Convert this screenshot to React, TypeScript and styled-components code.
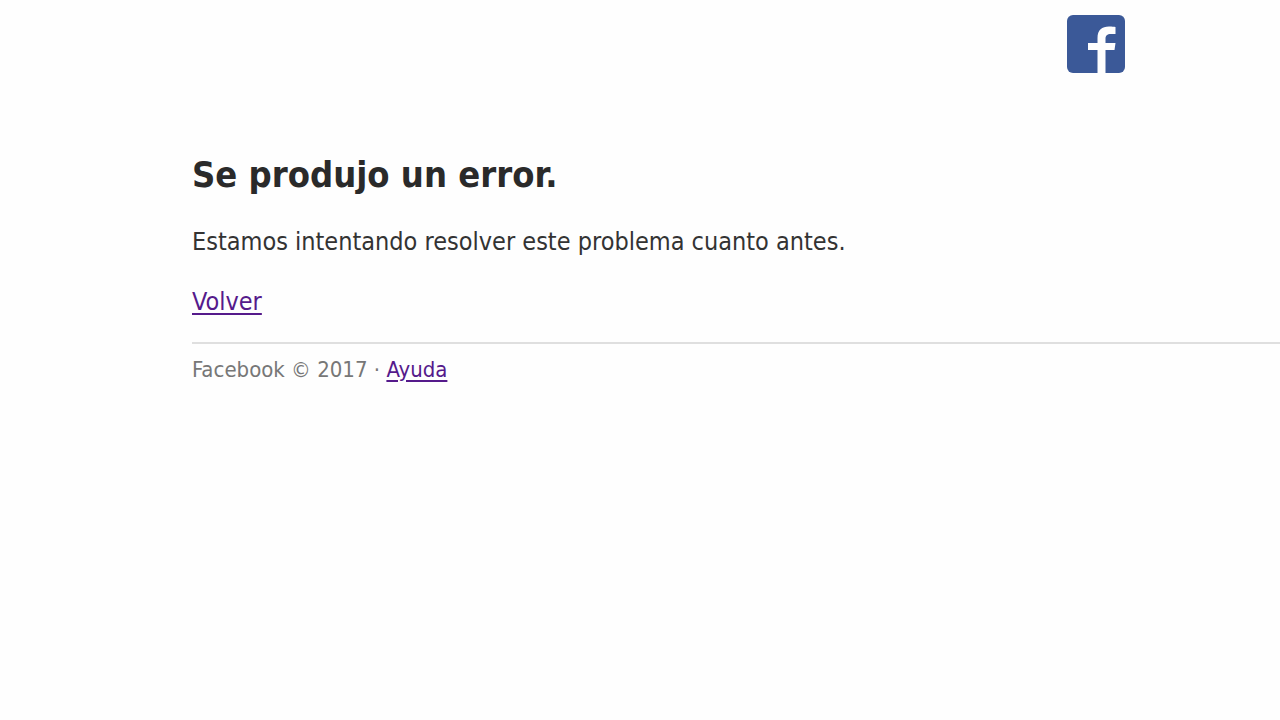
import React from "react";
import styled, { createGlobalStyle } from "styled-components";

const GlobalStyle = createGlobalStyle`
  body {
    margin: 0;
    background: #fefefe;
    color: #333;
    font-family: "DejaVu Sans Condensed", "DejaVu Sans", Tahoma, sans-serif;
    font-size: 25px;
    line-height: 30px;
  }
`;

const Page = styled.div`
  padding-left: 15%;
`;

const Header = styled.header`
  display: flex;
  justify-content: flex-end;
  padding: 14px 154px 0 0;
`;

const Logo = styled.svg`
  display: block;
  width: 60px;
  height: 60px;
`;

const Title = styled.h1`
  margin: 79px 0 0;
  color: #2a2a2a;
  font-size: 36px;
  line-height: 44px;
`;

const Text = styled.p`
  margin: 30px 0 0;
`;

const Link = styled.a`
  color: #551a8b;
  text-decoration: underline;
  text-decoration-thickness: 2px;
  text-underline-offset: 3px;
`;

const Footer = styled.footer`
  margin-top: 25px;
  padding-top: 11px;
  border-top: 2px solid #dfdfdf;
  color: #777;
  font-size: 22px;
`;

export default function App() {
  return (
    <Page>
      <GlobalStyle />
      <Header>
        <Logo viewBox="0 0 60 60" role="img" aria-label="Facebook">
          <rect x="1" y="1" width="58" height="58" rx="6" fill="#3b5998" />
          <path
            d="M31.500 60V36H22V29H31.500V24C31.500 16 36 12.500 43 12.500C46 12.500 48 12.700 49.500 13V20H45C41 20 39.500 21.500 39.500 25V29H49.500L48.500 36H39.500V60Z"
            fill="#fefefe"
          />
        </Logo>
      </Header>
      <main>
        <Title>Se produjo un error.</Title>
        <Text>Estamos intentando resolver este problema cuanto antes.</Text>
        <Text>
          <Link href="#">Volver</Link>
        </Text>
      </main>
      <Footer>
        Facebook © 2017 · <Link href="#">Ayuda</Link>
      </Footer>
    </Page>
  );
}
